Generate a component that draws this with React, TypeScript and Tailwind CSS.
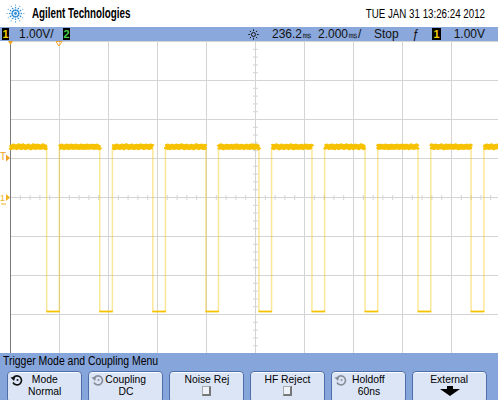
import React from 'react'

const sans = { fontFamily: '"Liberation Sans", Arial, sans-serif' }

const W = 498
const H = 312
const YEL = '#f6c200'

const noise = (i: number) =>
   Math.sin(i * 12.9898) * 0.45 + Math.sin(i * 7.233 + 1.3) * 0.35 + Math.sin(i * 2.17) * 0.2

const highSeg = (x0: number, x1: number, seed: number) => {
   const pts: string[] = []
   for (let x = x0; x <= x1; x += 0.5) {
      pts.push(`${x.toFixed(1)},${(105.8 + noise(x * 3 + seed)).toFixed(2)}`)
   }
   pts.push(`${x1.toFixed(1)},105.8`)
   return pts.join(' ')
}

const Waveform = () => {
   const rises = Array.from({ length: 9 }, (_, k) => 59.3 + 53.07 * k)
   const falls = Array.from({ length: 9 }, (_, k) => 46.7 + 53.05 * k)
   const highs: [number, number][] = [[10.5, falls[0]]]
   for (let k = 0; k < 8; k++) highs.push([rises[k], falls[k + 1]])
   highs.push([rises[8], W])

   return (
      <g>
         {falls.map((f, k) => (
            <g key={'e' + k}>
               <line x1={f} y1={106} x2={f} y2={270.5} stroke={YEL} strokeOpacity={0.4} strokeWidth={1.5} />
               <line x1={rises[k]} y1={106} x2={rises[k]} y2={270.5} stroke={YEL} strokeOpacity={0.4} strokeWidth={1.5} />
               <line x1={f - 0.5} y1={270.5} x2={rises[k] + 0.5} y2={270.5} stroke={YEL} strokeWidth={1.8} />
            </g>
         ))}
         {highs.map(([a, b], i) => (
            <polyline
               key={'h' + i}
               points={highSeg(a, b, i * 7)}
               fill="none"
               stroke={YEL}
               strokeWidth={5}
               strokeLinejoin="round"
            />
         ))}
      </g>
   )
}

const Graticule = () => {
   const vx = Array.from({ length: 11 }, (_, i) => 10 + 49 * i)
   const hy = Array.from({ length: 9 }, (_, i) => 39 * i)
   const ticksX = Array.from({ length: 50 }, (_, i) => 10 + 9.8 * i)
   const ticksY = Array.from({ length: 40 }, (_, i) => 7.8 * i)
   return (
      <svg width={W} height={H} className="block">
         {vx.map((x) => (
            <line key={'v' + x} x1={x + 0.5} y1={0} x2={x + 0.5} y2={H} stroke="#d4d4d4" />
         ))}
         {hy.map((y) => (
            <line key={'hl' + y} x1={10} y1={y + 0.5} x2={W} y2={y + 0.5} stroke="#d4d4d4" />
         ))}
         {ticksX.map((x) => (
            <line key={'tx' + x} x1={x + 0.5} y1={154} x2={x + 0.5} y2={159} stroke="#d4d4d4" />
         ))}
         {ticksY.map((y) => (
            <line key={'ty' + y} x1={253} y1={y + 0.5} x2={258} y2={y + 0.5} stroke="#d4d4d4" />
         ))}
         <line x1={10.5} y1={0} x2={10.5} y2={H} stroke="#7a7a7a" />
         <Waveform />
         <polygon points="8,0 13,0 10.5,4" fill="#f0a020" />
         <polygon points="56,0.5 62,0.5 59,5" fill="none" stroke="#f0a020" strokeWidth={1} />
         <text x={0} y={119} fontSize={10} fill="#f0a020" fontFamily="Liberation Sans, sans-serif">T</text>
         <polygon points="6,113.5 10,117 6,120.5" fill="#f0a020" />
         <text x={0} y={160} fontSize={9} fill="#f0b020" fontFamily="Liberation Sans, sans-serif">1</text>
         <polygon points="6,153 10,156.5 6,160" fill="#f0b020" />
         <line x1={1} y1={163} x2={6} y2={163} stroke="#f0b020" />
      </svg>
   )
}

const Spark = ({ size = 20, color = '#2a8ad4' }: { size?: number; color?: string }) => {
   const rays = Array.from({ length: 12 }, (_, i) => (i * Math.PI * 2) / 12)
   const c = size / 2
   return (
      <svg width={size} height={size} viewBox={`0 0 ${size} ${size}`}>
         {rays.map((a, i) =>
            [0.32, 0.55, 0.8].map((r, j) => (
               <circle
                  key={i + '-' + j}
                  cx={c + Math.cos(a) * c * r}
                  cy={c + Math.sin(a) * c * r}
                  r={j === 0 ? 1 : j === 1 ? 0.8 : 0.55}
                  fill={color}
               />
            ))
         )}
         <circle cx={c} cy={c} r={1.4} fill={color} />
      </svg>
   )
}

const Sun = () => (
   <svg width={11} height={11} viewBox="0 0 11 11">
      <circle cx={5.5} cy={5.5} r={2} fill="none" stroke="#1a1a1a" strokeWidth={1} />
      {Array.from({ length: 8 }, (_, i) => {
         const a = (i * Math.PI) / 4
         return (
            <line
               key={i}
               x1={5.5 + Math.cos(a) * 3.4}
               y1={5.5 + Math.sin(a) * 3.4}
               x2={5.5 + Math.cos(a) * 5.2}
               y2={5.5 + Math.sin(a) * 5.2}
               stroke="#1a1a1a"
               strokeWidth={1}
            />
         )
      })}
   </svg>
)

const Cycle = ({ faded }: { faded?: boolean }) => (
   <svg width={14} height={12} viewBox="0 0 14 12" className={faded ? 'opacity-40' : ''}>
      <path d="M3.5 3.5 A4.5 4.5 0 1 1 3 8.5" fill="none" stroke="#111" strokeWidth={1.6} />
      <polygon points="0.5,3.5 5.5,2.5 4,7" fill="#111" />
      <circle cx={7.5} cy={6} r={1} fill="#111" />
   </svg>
)

const Check = () => (
   <span className="mt-[1px] block h-[10px] w-[9px] border-b-2 border-r-2 border-l border-t border-b-[#777] border-l-[#aaa] border-r-[#777] border-t-[#aaa] bg-[#eef2fa]" />
)

const Btn = ({ children, icon }: { children: React.ReactNode; icon?: React.ReactNode }) => (
   <div className="relative flex h-[32px] w-[75px] flex-col items-center rounded-[4px] border border-[#4d6ea8] bg-[#dbe5f6] pt-[1px] text-[11px] leading-[12px] text-black shadow-[inset_0_1px_0_#fff]">
      {icon && <div className="absolute left-[2px] top-[2px]">{icon}</div>}
      {children}
   </div>
)

const BtnText = ({ children }: { children: React.ReactNode }) => (
   <span className="inline-block origin-center scale-x-[0.94] whitespace-nowrap">{children}</span>
)

export default function App() {
   return (
      <div className="h-[400px] w-[498px] overflow-hidden bg-white" style={sans}>
         {/* header */}
         <div className="flex h-[27px] items-center bg-white pl-[5px] pr-[13px]">
            <Spark size={21} />
            <span className="ml-[6px] inline-block origin-left scale-x-[0.7] whitespace-nowrap text-[14px] font-bold text-black">
               Agilent Technologies
            </span>
            <span className="ml-auto inline-block origin-right scale-x-[0.75] whitespace-nowrap text-[13px] text-black">
               TUE JAN 31 13:26:24 2012
            </span>
         </div>
         {/* status bar */}
         <div className="flex h-[14px] items-center whitespace-nowrap bg-[#8aa8dc] text-[12px] leading-[12px] text-[#111]">
            <span className="ml-[2px] flex h-[12px] w-[7px] items-center justify-center bg-black text-[11px] font-bold text-[#f6d000]">1</span>
            <span className="ml-[10px] w-[44px]">1.00V/</span>
            <span className="flex h-[12px] w-[7px] items-center justify-center bg-black text-[11px] font-bold text-[#4cd24c]">2</span>
            <span className="w-[178px]" />
            <span className="w-[24px]"><Sun /></span>
            <span className="w-[46px]">
               236.2<span className="text-[10px]">㎳</span>
            </span>
            <span className="w-[56px]">
               2.000<span className="text-[10px]">㎳</span>/
            </span>
            <span className="w-[38px]">Stop</span>
            <span className="w-[20px] italic">ƒ</span>
            <span className="flex h-[12px] w-[9px] items-center justify-center bg-black text-[11px] font-bold text-[#f6d000]">1</span>
            <span className="ml-auto mr-[13px]">1.00V</span>
         </div>
         {/* graticule */}
         <Graticule />
         {/* menu */}
         <div className="h-[47px] bg-[#86a5da]">
            <div className="h-[18px] pl-[3px] pt-[2px] text-[12px] leading-[13px] text-black">
               <span className="inline-block origin-left scale-x-[0.87] whitespace-nowrap">Trigger Mode and Coupling Menu</span>
            </div>
            <div className="flex gap-[6px] pl-[7px]">
               <Btn icon={<Cycle />}>
                  <BtnText>Mode</BtnText>
                  <BtnText>Normal</BtnText>
               </Btn>
               <Btn icon={<Cycle faded />}>
                  <BtnText>Coupling</BtnText>
                  <BtnText>DC</BtnText>
               </Btn>
               <Btn>
                  <BtnText>Noise Rej</BtnText>
                  <Check />
               </Btn>
               <Btn>
                  <BtnText>HF Reject</BtnText>
                  <Check />
               </Btn>
               <Btn icon={<Cycle faded />}>
                  <BtnText>Holdoff</BtnText>
                  <BtnText>60ns</BtnText>
               </Btn>
               <Btn>
                  <BtnText>External</BtnText>
                  <svg width={20} height={10} viewBox="0 0 20 10" className="mt-[1px]">
                     <polygon points="7,0 13,0 13,3 20,3 10,10 0,3 7,3" fill="#000" />
                  </svg>
               </Btn>
            </div>
         </div>
      </div>
   )
}
